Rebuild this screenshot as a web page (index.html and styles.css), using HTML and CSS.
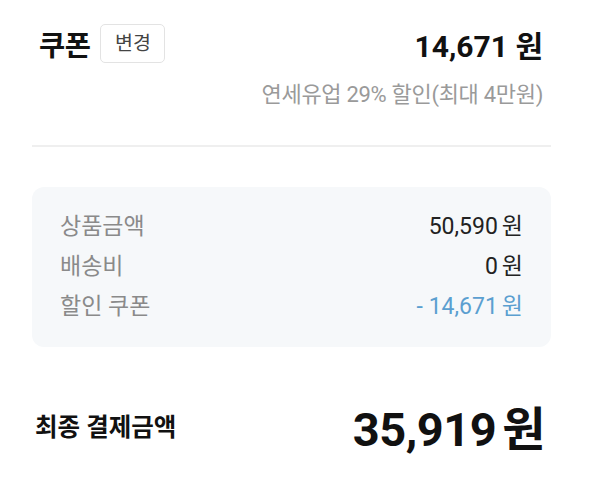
FILE: index.html
```html
<!DOCTYPE html>
<html lang="ko">
<head>
<meta charset="utf-8">
<link rel="stylesheet" href="styles.css">
</head>
<body>
<div class="page">
  <section class="coupon">
    <div class="coupon-head">
      <div class="coupon-title">
        <span class="title">쿠폰</span>
        <button class="change-btn">변경</button>
      </div>
      <span class="coupon-amount">14,671 원</span>
    </div>
    <div class="coupon-desc">연세유업 29% 할인(최대 4만원)</div>
  </section>
  <div class="divider"></div>
  <section class="summary">
    <div class="row"><span class="label">상품금액</span><span class="value">50,590<span class="won">원</span></span></div>
    <div class="row"><span class="label">배송비</span><span class="value">0<span class="won">원</span></span></div>
    <div class="row"><span class="label">할인 쿠폰</span><span class="value discount">- 14,671<span class="won">원</span></span></div>
  </section>
  <section class="total">
    <span class="total-label">최종 결제금액</span>
    <span class="total-value">35,919<span class="won">원</span></span>
  </section>
</div>
</body>
</html>
```

FILE: styles.css
```css
* { box-sizing: border-box; }
html, body { margin: 0; padding: 0; background: #fff; }
body {
  font-family: Roboto, "Noto Sans CJK KR", sans-serif;
  color: #111;
  width: 600px;
  height: 498px;
  overflow: hidden;
}
.page {
  margin-left: 32px;
  width: 519px;
  padding-top: 24px;
}
.coupon { padding: 0 8px 0 7px; }
.coupon-head {
  display: flex;
  justify-content: space-between;
  align-items: center;
  height: 39px;
}
.coupon-title { display: flex; align-items: center; gap: 10px; }
.title { font-size: 28.5px; font-weight: 700; color: #111; letter-spacing: -0.5px; }
.change-btn {
  font-family: inherit;
  font-size: 19.5px;
  color: #444;
  background: #fff;
  border: 1px solid #e3e3e3;
  border-radius: 5px;
  height: 39px;
  width: 65px;
  padding: 0;
  line-height: 1;
}
.coupon-amount { font-size: 30px; font-weight: 700; color: #111; }
.coupon-desc {
  text-align: right;
  font-size: 22px;
  color: #9a9a9a;
  margin-top: 20px;
  line-height: 24px;
  letter-spacing: -0.3px;
}
.divider { height: 2px; background: #efefef; margin-top: 38px; }
.summary {
  margin-top: 40px;
  background: #f6f8fa;
  border-radius: 12px;
  padding: 17px 28px 23px;
}
.row {
  display: flex;
  justify-content: space-between;
  align-items: center;
  height: 40px;
  font-size: 23px;
}
.label { color: #8a8a8a; }
.value { color: #222; }
.value.discount { color: #5b9fd0; }
.won { margin-left: 4px; }
.total {
  display: flex;
  justify-content: space-between;
  align-items: center;
  margin-top: 44px;
  padding: 0 6px 0 3px;
}
.total-label { font-size: 24.5px; font-weight: 700; color: #111; }
.total-value { font-size: 47px; font-weight: 700; color: #111; letter-spacing: -0.5px; }
.total-value .won { margin-left: 6px; }
```
